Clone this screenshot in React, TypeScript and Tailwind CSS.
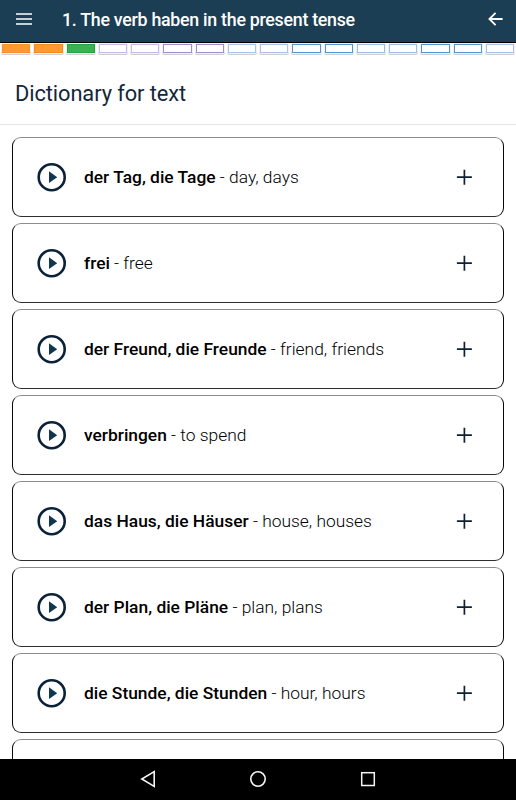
import React from 'react';

const steps = [
  'bg-[#ff9933] border-[#f99328]',
  'bg-[#ff9933] border-[#f58a1c]',
  'bg-[#37b256] border-[#1fa344]',
  'bg-white border-[#c9b8e8]',
  'bg-white border-[#c9b8e8]',
  'bg-white border-[#a48ad2]',
  'bg-white border-[#a48ad2]',
  'bg-white border-[#a9c3ea]',
  'bg-white border-[#a9c0ea]',
  'bg-white border-[#5295d4]',
  'bg-white border-[#5295d4]',
  'bg-white border-[#9fbbe8]',
  'bg-white border-[#9fbbe8]',
  'bg-white border-[#5295d4]',
  'bg-white border-[#5295d4]',
  'bg-white border-[#a9c0ea]',
];

const words = [
  { german: 'der Tag, die Tage', english: 'day, days' },
  { german: 'frei', english: 'free' },
  { german: 'der Freund, die Freunde', english: 'friend, friends' },
  { german: 'verbringen', english: 'to spend' },
  { german: 'das Haus, die Häuser', english: 'house, houses' },
  { german: 'der Plan, die Pläne', english: 'plan, plans' },
  { german: 'die Stunde, die Stunden', english: 'hour, hours' },
];

const cardClass =
  'h-[80px] shrink-0 rounded-[9px] border border-[#05070a] border-t-[#8c8c8c] border-b-[#2c2e30] bg-white';

const PlayIcon = () => (
  <svg className="w-[30px] h-[30px] shrink-0" viewBox="0 0 30 30">
    <circle cx="14.7" cy="15.2" r="13" fill="none" stroke="#0b2138" strokeWidth="2.6" />
    <path d="M12 9.3v11.8l8.2-5.9z" fill="#123650" />
  </svg>
);

const PlusIcon = () => (
  <svg className="w-4 h-4 shrink-0" viewBox="0 0 16 16">
    <path d="M8.4 .7v15M.9 8.2h15" stroke="#0e2034" strokeWidth="1.7" />
  </svg>
);

const Header = () => (
  <header className="h-[43px] shrink-0 flex items-center bg-[#1b3e54] border-b border-black pb-1 pl-4 pr-[13px] text-white">
    <svg className="w-4 h-3" viewBox="0 0 16 12">
      <path d="M0 1h16M0 6h16M0 11h16" stroke="currentColor" strokeWidth="1.7" />
    </svg>
    <h1 className="flex-1 ml-[30px] pt-px text-[17.8px] leading-6 tracking-[-0.27px] font-medium whitespace-nowrap">
      1. The verb haben in the present tense
    </h1>
    <svg className="w-[15px] h-[14px]" viewBox="0 0 15 14">
      <path d="M7.6.8 1.4 7l6.2 6.2M1.4 7h13.2" fill="none" stroke="currentColor" strokeWidth="1.8" />
    </svg>
  </header>
);

const App = () => {
  return (
    <div className="h-[800px] w-[516px] flex flex-col overflow-hidden bg-white font-['Roboto','Noto_Sans',sans-serif]">
      <Header />

      <div className="h-[13px] shrink-0 grid grid-cols-16">
        {steps.map((color, i) => (
          <div key={i} className="px-px">
            <div className="h-[11px] rounded-[2px] bg-[#f5eff7] px-px pt-px pb-px shadow-[0_1px_0_#d0d0d3]">
              <div className={`h-[9px] border ${color}`} />
            </div>
          </div>
        ))}
      </div>

      <div className="h-[69px] shrink-0 flex items-center border-b border-[#e6e6e6] pl-[15px] pt-[7px]">
        <h2 className="text-[21.8px] leading-7 tracking-[-0.08px] text-[#14263a]">Dictionary for text</h2>
      </div>

      <main className="flex-1 min-h-0 flex flex-col gap-1.5 overflow-hidden pt-3 px-3">
        {words.map((word) => (
          <div key={word.german} className={`${cardClass} flex items-center pl-6 pr-[31px]`}>
            <PlayIcon />
            <p className="flex-1 ml-[17px] text-[17.4px] leading-6 font-light text-black whitespace-nowrap">
              <span className="font-medium">{word.german}</span> - {word.english}
            </p>
            <PlusIcon />
          </div>
        ))}
        <div className={cardClass} />
      </main>

      <nav className="h-[41px] shrink-0 flex justify-center items-center gap-[94px] bg-black pb-px">
        <svg className="w-4 h-[18px]" viewBox="0 0 16 18">
          <path d="M14.2 1.6v14.8L1.8 9z" fill="none" stroke="#f5f5f5" strokeWidth="1.6" />
        </svg>
        <svg className="w-4 h-4" viewBox="0 0 16 16">
          <circle cx="8" cy="8" r="7.2" fill="none" stroke="#f5f5f5" strokeWidth="1.6" />
        </svg>
        <svg className="w-4 h-4" viewBox="0 0 16 16">
          <rect x="1.7" y="1.7" width="12.6" height="12.8" fill="none" stroke="#f5f5f5" strokeWidth="1.5" />
        </svg>
      </nav>
    </div>
  );
};

export default App;
